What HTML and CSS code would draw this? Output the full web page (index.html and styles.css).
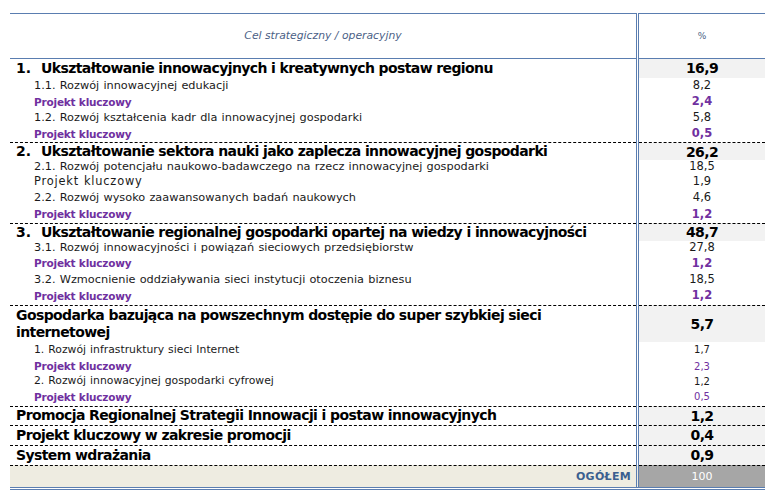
FILE: index.html
```html
<!DOCTYPE html>
<html lang="pl">
<head>
<meta charset="utf-8">
<link rel="stylesheet" href="styles.css">
</head>
<body>
<div class="wrap">
<table class="t">
  <thead>
    <tr class="head">
      <th class="goal-h">Cel strategiczny / operacyjny</th>
      <th class="pct-h">%</th>
    </tr>
  </thead>
  <tbody>
    <tr class="main h19"><td class="lbl"><span class="n">1.</span>Ukształtowanie innowacyjnych i kreatywnych postaw regionu</td><td class="val">16,9</td></tr>
    <tr class="sub h16"><td class="lbl">1.1. Rozwój innowacyjnej edukacji</td><td class="val">8,2</td></tr>
    <tr class="key h17"><td class="lbl">Projekt kluczowy</td><td class="val">2,4</td></tr>
    <tr class="sub h15"><td class="lbl">1.2. Rozwój kształcenia kadr dla innowacyjnej gospodarki</td><td class="val">5,8</td></tr>
    <tr class="key h17 end"><td class="lbl">Projekt kluczowy</td><td class="val">0,5</td></tr>

    <tr class="main h17"><td class="lbl"><span class="n">2.</span>Ukształtowanie sektora nauki jako zaplecza innowacyjnej gospodarki</td><td class="val">26,2</td></tr>
    <tr class="sub h14"><td class="lbl">2.1. Rozwój potencjału naukowo-badawczego na rzecz innowacyjnej gospodarki</td><td class="val">18,5</td></tr>
    <tr class="sub plain h16"><td class="lbl">Projekt kluczowy</td><td class="val">1,9</td></tr>
    <tr class="sub h16"><td class="lbl">2.2. Rozwój wysoko zaawansowanych badań naukowych</td><td class="val">4,6</td></tr>
    <tr class="key h17 end"><td class="lbl">Projekt kluczowy</td><td class="val">1,2</td></tr>

    <tr class="main h18"><td class="lbl"><span class="n">3.</span>Ukształtowanie regionalnej gospodarki opartej na wiedzy i innowacyjności</td><td class="val">48,7</td></tr>
    <tr class="sub h14"><td class="lbl">3.1. Rozwój innowacyjności i powiązań sieciowych przedsiębiorstw</td><td class="val">27,8</td></tr>
    <tr class="key h17"><td class="lbl">Projekt kluczowy</td><td class="val">1,2</td></tr>
    <tr class="sub h15"><td class="lbl">3.2. Wzmocnienie oddziaływania sieci instytucji otoczenia biznesu</td><td class="val">18,5</td></tr>
    <tr class="key h18 end"><td class="lbl">Projekt kluczowy</td><td class="val">1,2</td></tr>

    <tr class="main two"><td class="lbl">Gospodarka bazująca na powszechnym dostępie do super szybkiej sieci internetowej</td><td class="val">5,7</td></tr>
    <tr class="sub sm h16"><td class="lbl">1. Rozwój infrastruktury sieci Internet</td><td class="val small">1,7</td></tr>
    <tr class="key h17"><td class="lbl">Projekt kluczowy</td><td class="val small">2,3</td></tr>
    <tr class="sub sm h13"><td class="lbl">2. Rozwój innowacyjnej gospodarki cyfrowej</td><td class="val small">1,2</td></tr>
    <tr class="key h18 end"><td class="lbl">Projekt kluczowy</td><td class="val small">0,5</td></tr>

    <tr class="main h19 end"><td class="lbl">Promocja Regionalnej Strategii Innowacji i postaw innowacyjnych</td><td class="val">1,2</td></tr>
    <tr class="main h20 end"><td class="lbl">Projekt kluczowy w zakresie promocji</td><td class="val">0,4</td></tr>
    <tr class="main h20 end"><td class="lbl">System wdrażania</td><td class="val">0,9</td></tr>

    <tr class="total"><td class="lbl">OGÓŁEM</td><td class="val">100</td></tr>
  </tbody>
</table>
</div>
</body>
</html>
```

FILE: styles.css
```css
html, body {
  margin: 0;
  padding: 0;
  background: #ffffff;
}

.wrap {
  padding: 13px 0 0 10px;
}

.t {
  border-collapse: collapse;
  width: 755px;
  table-layout: fixed;
  font-family: "Century Gothic", "DejaVu Sans", sans-serif;
  color: #000;
}

.t td, .t th {
  padding: 0;
  vertical-align: middle;
  line-height: 1;
}

.t td.lbl { width: 626px; }

.head th {
  height: 44px;
  border-top: 1px solid #5a7db0;
  border-bottom: 1px solid #5a7db0;
  font-family: "DejaVu Sans", sans-serif;
  font-weight: normal;
  color: #4b5f86;
}

.goal-h {
  width: 626px;
  font-style: italic;
  font-size: 10.8px;
  text-align: center;
  padding-left: 0;
}

.pct-h {
  width: 126px;
  font-size: 9px;
  text-align: center;
  border-left: 3px double #5a7db0;
}

.t td.val {
  border-left: 3px double #5a7db0;
  text-align: center;
}

.main td.lbl {
  font-size: 14px;
  font-weight: bold;
  letter-spacing: -0.6px;
  padding-left: 6px;
  line-height: 17px;
}

.main td.val {
  background: #f2f2f2;
  font-size: 14px;
  font-weight: bold;
  letter-spacing: -0.6px;
}

.n {
  display: inline-block;
  width: 25px;
  letter-spacing: 0;
}

.sub td.lbl {
  font-size: 11.3px;
  word-spacing: 0.6px;
  padding-left: 24px;
  color: #1a1a1a;
}

.sub.sm td.lbl {
  font-size: 10.8px;
}

.sub.plain td.lbl {
  font-size: 11.4px;
  letter-spacing: 0.8px;
}

.sub td.val {
  font-size: 11.5px;
  color: #1a1a1a;
}

.key td.lbl {
  font-size: 10.5px;
  font-weight: bold;
  letter-spacing: -0.2px;
  color: #7030a0;
  padding-left: 24px;
}

.key td.val {
  font-size: 11.5px;
  font-weight: bold;
  color: #7030a0;
}

.t td.val.small {
  font-size: 10px;
}

.key td.val.small {
  font-weight: normal;
}

.h13 { height: 13px; }
.h14 { height: 14px; }
.h15 { height: 15px; }
.h16 { height: 16px; }
.h17 { height: 17px; }
.h18 { height: 18px; }
.h19 { height: 19px; }
.h20 { height: 20px; }
.two { height: 37px; }

.end td {
  border-bottom: 1px dashed #000;
}

.total td {
  height: 21px;
  border-bottom: 3px double #5a7db0;
}

.total td.lbl {
  background: #eeece1;
  text-align: right;
  padding-right: 5px;
  font-size: 11px;
  font-weight: bold;
  color: #3b5f8f;
  letter-spacing: 0.3px;
}

.total td.val {
  background: #a6a6a6;
  color: #ffffff;
  font-size: 11px;
}
```
